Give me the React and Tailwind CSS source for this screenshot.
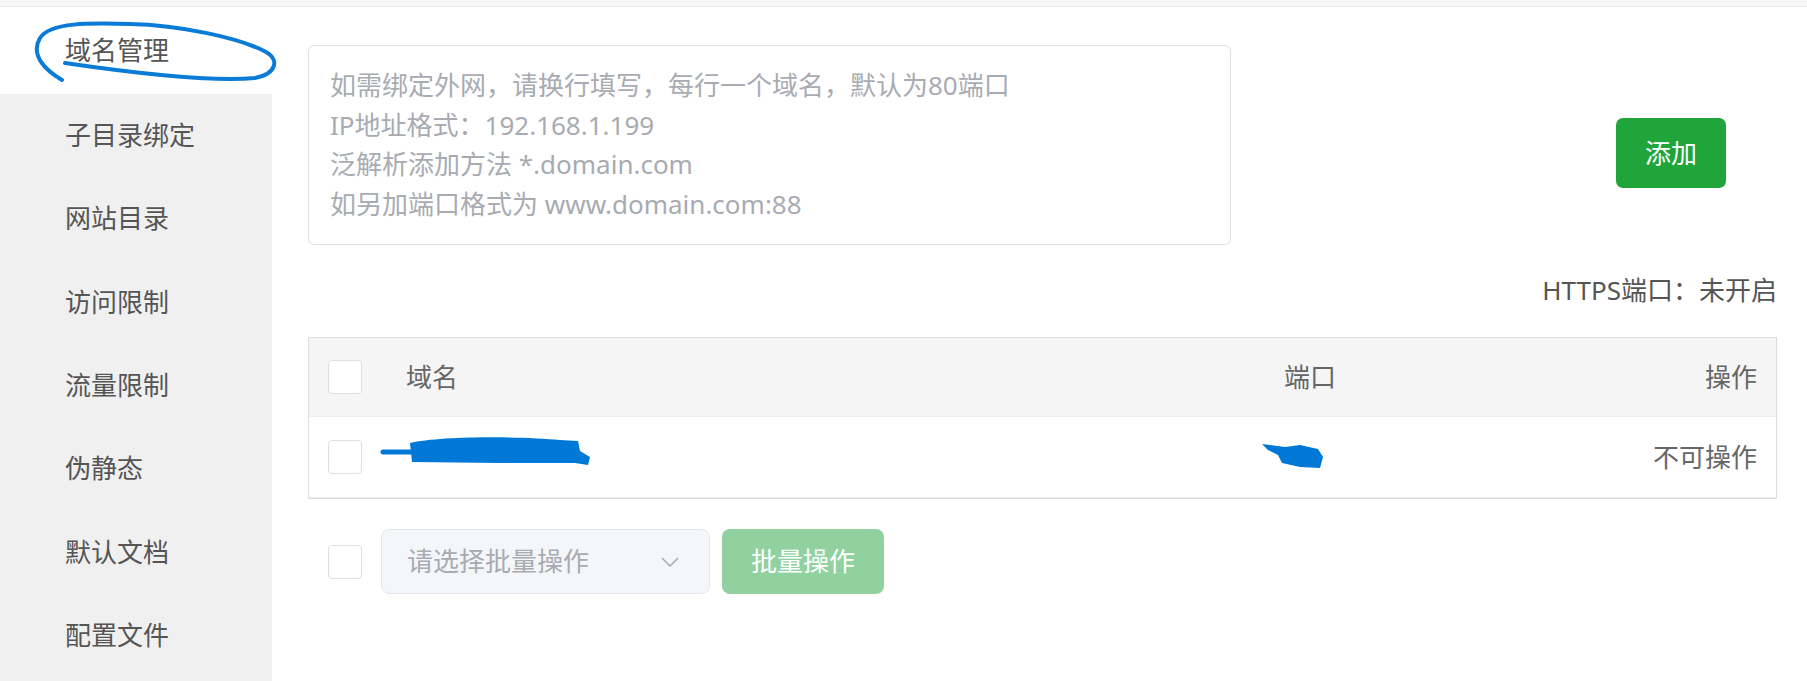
const menu = ["域名管理", "子目录绑定", "网站目录", "访问限制", "流量限制", "伪静态", "默认文档", "配置文件"];

const placeholder =
  "如需绑定外网，请换行填写，每行一个域名，默认为80端口\nIP地址格式：192.168.1.199\n泛解析添加方法 *.domain.com\n如另加端口格式为 www.domain.com:88";

function Checkbox() {
  return <span className="block h-[34px] w-[34px] shrink-0 rounded-[4px] border border-[#dcdfe6] bg-white" />;
}

export default function App() {
  return (
    <div
      className="relative flex h-[681px] w-full flex-col overflow-hidden bg-white text-[26px] text-[#555]"
      style={{ fontFamily: '"Noto Sans", "Noto Sans CJK SC", sans-serif' }}
    >
      <div className="h-[7px] shrink-0 border-b border-[#ebebeb] bg-[#f7f7f7]" />

      <div className="flex flex-1">
        <aside className="w-[272px] shrink-0 bg-[#f0f0f0]">
          {menu.map((item, i) => (
            <div
              key={item}
              className={
                i === 0
                  ? "flex h-[87px] items-center bg-white pl-[65px]"
                  : "flex h-[83.3px] items-center pl-[65px]"
              }
            >
              {item}
            </div>
          ))}
        </aside>

        <main className="flex-1 pl-[36px] pr-[30px]">
          <div className="mt-[38px] flex">
            <textarea
              className="h-[200px] w-[923px] resize-none rounded-[6px] border border-[#dcdfe6] px-[21px] py-[20px] leading-[39.5px] outline-none placeholder:text-[#a8abb2]"
              placeholder={placeholder}
            />
            <div className="flex flex-1 justify-end pr-[51px] pt-[73px]">
              <button className="h-[70px] w-[110px] rounded-[7px] bg-[#20a53a] text-white">添加</button>
            </div>
          </div>

          <div className="mt-[26px] text-right leading-[39px]">HTTPS端口：未开启</div>

          <div className="mt-[27px] border border-[#dddddd]">
            <div className="flex h-[79px] items-center border-b border-[#ebeef5] bg-[#f5f5f5] pl-[19px] pr-[19px] text-[#666]">
              <Checkbox />
              <span className="ml-[44px] flex-1">域名</span>
              <span className="w-[421px]">端口</span>
              <span>操作</span>
            </div>
            <div className="flex h-[81px] items-center border-b border-[#ebeef5] pl-[19px] pr-[19px] text-[#666]">
              <Checkbox />
              <span className="ml-[44px] flex-1" />
              <span className="w-[421px]" />
              <span>不可操作</span>
            </div>
          </div>

          <div className="mt-[30px] flex items-center pl-[20px]">
            <Checkbox />
            <div className="ml-[19px] flex h-[65px] w-[329px] items-center justify-between rounded-[8px] border border-[#e4e7ed] bg-[#f5f6fa] pl-[25px] pr-[30px] text-[#a8abb2]">
              <span>请选择批量操作</span>
              <svg width="18" height="10" viewBox="0 0 18 10" fill="none">
                <path d="M1 1l8 8 8-8" stroke="#a8abb2" strokeWidth="1.5" />
              </svg>
            </div>
            <button className="ml-[12px] h-[65px] w-[162px] rounded-[8px] bg-[#90d19f] text-white">批量操作</button>
          </div>
        </main>
      </div>

      <svg className="pointer-events-none absolute left-0 top-0" width="1807" height="681" fill="none">
        <path
          d="M62 80 C45 70 30 55 40 38 C50 22 90 23 130 24 C180 25 240 38 266 52 C280 60 276 74 255 78 C210 82 140 74 65 63"
          stroke="#0a7bd6"
          strokeWidth="4"
          strokeLinecap="round"
        />
        <path d="M383 452 L415 452" stroke="#0078d7" strokeWidth="5" strokeLinecap="round" />
        <path
          d="M410 443 C440 436 520 436 560 440 L578 441 L580 451 L590 457 L588 465 L575 463 L500 463 L412 462 Z"
          fill="#0078d7"
        />
        <path
          d="M1262 444 L1285 447 L1300 445 L1318 449 L1323 457 L1320 468 L1300 467 L1282 463 L1278 455 L1268 450 Z"
          fill="#0078d7"
        />
      </svg>
    </div>
  );
}
